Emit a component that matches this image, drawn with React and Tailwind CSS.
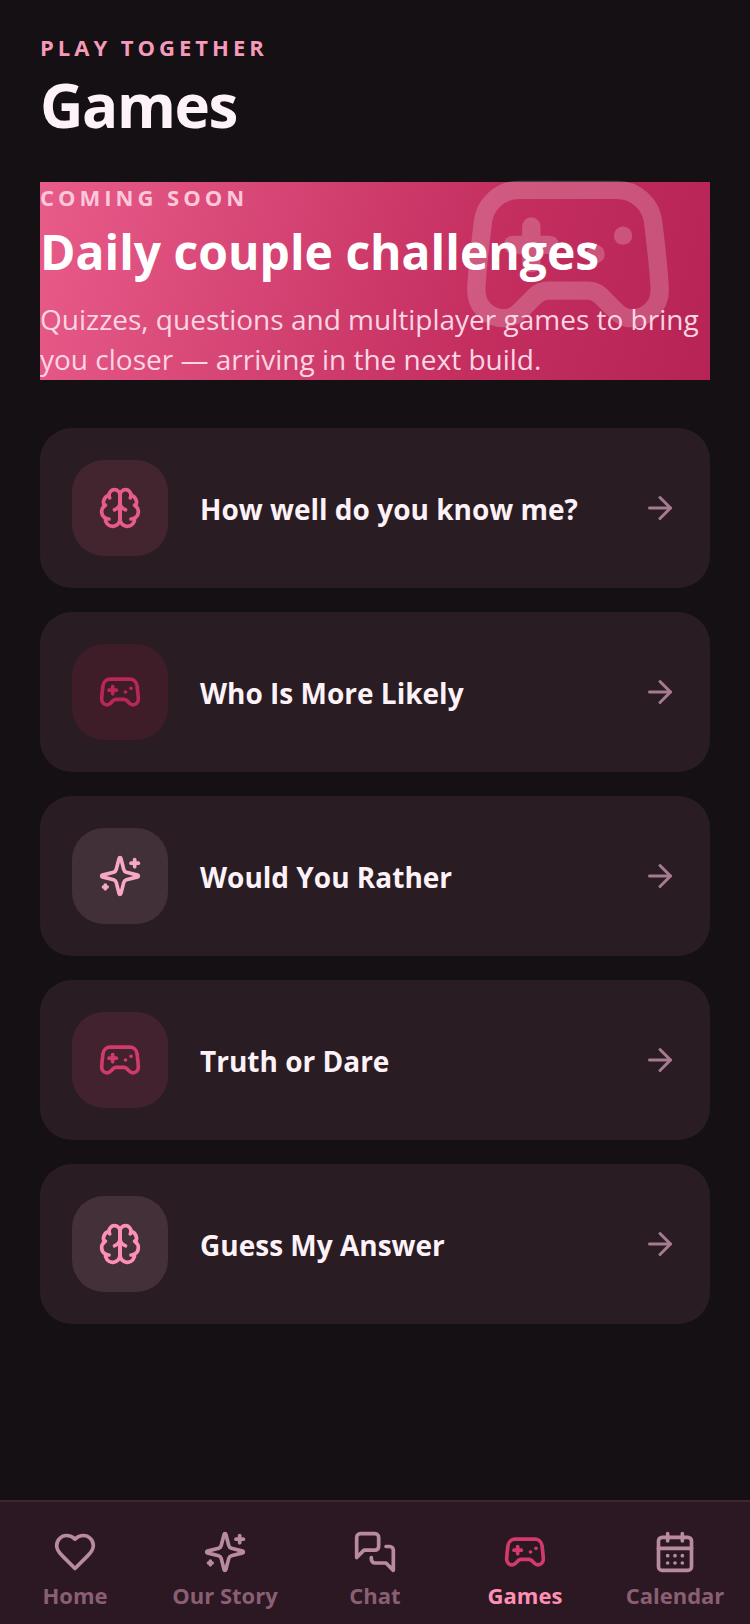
import { ArrowRight, CalendarDays, Gamepad2 } from "lucide-react";

// the installed lucide draws these differently, so the paths are written out here
function Stroke({ size, className, children }) {
  return (
    <svg
      xmlns="http://www.w3.org/2000/svg"
      width={size}
      height={size}
      viewBox="0 0 24 24"
      fill="none"
      stroke="currentColor"
      strokeWidth="2"
      strokeLinecap="round"
      strokeLinejoin="round"
      className={className}
    >
      {children}
    </svg>
  );
}

const Brain = (props) => (
  <Stroke {...props}>
    <path d="M12 5a3 3 0 1 0-5.997.125 4 4 0 0 0-2.526 5.77 4 4 0 0 0 .556 6.588A4 4 0 1 0 12 18Z" />
    <path d="M12 5a3 3 0 1 1 5.997.125 4 4 0 0 1 2.526 5.77 4 4 0 0 1-.556 6.588A4 4 0 1 1 12 18Z" />
    <path d="M15 13a4.5 4.5 0 0 1-3-4 4.5 4.5 0 0 1-3 4" />
    <path d="M17.599 6.5a3 3 0 0 0 .399-1.375" />
    <path d="M6.003 5.125A3 3 0 0 0 6.401 6.5" />
    <path d="M3.477 10.896a4 4 0 0 1 .585-.396" />
    <path d="M19.938 10.5a4 4 0 0 1 .585.396" />
    <path d="M6 18a4 4 0 0 1-1.967-.516" />
    <path d="M19.967 17.484A4 4 0 0 1 18 18" />
  </Stroke>
);

const Sparkles = (props) => (
  <Stroke {...props}>
    <path d="M9.937 15.5A2 2 0 0 0 8.5 14.063l-6.135-1.582a.5.5 0 0 1 0-.962L8.5 9.936A2 2 0 0 0 9.937 8.5l1.582-6.135a.5.5 0 0 1 .963 0L14.063 8.5A2 2 0 0 0 15.5 9.937l6.135 1.581a.5.5 0 0 1 0 .964L15.5 14.063a2 2 0 0 0-1.437 1.437l-1.582 6.135a.5.5 0 0 1-.963 0z" />
    <path d="M20 3v4" />
    <path d="M22 5h-4" />
    <path d="M4 17v2" />
    <path d="M5 18H3" />
  </Stroke>
);

const Heart = (props) => (
  <Stroke {...props}>
    <path d="M19 14c1.49-1.46 3-3.21 3-5.5A5.5 5.5 0 0 0 16.5 3c-1.76 0-3 .5-4.5 2-1.5-1.5-2.74-2-4.5-2A5.5 5.5 0 0 0 2 8.5c0 2.3 1.5 4.05 3 5.5l7 7Z" />
  </Stroke>
);

const Messages = (props) => (
  <Stroke {...props}>
    <path d="M14 9a2 2 0 0 1-2 2H6l-4 4V4a2 2 0 0 1 2-2h8a2 2 0 0 1 2 2z" />
    <path d="M18 9h2a2 2 0 0 1 2 2v11l-4-4h-6a2 2 0 0 1-2-2v-1" />
  </Stroke>
);

const games = [
  { title: "How well do you know me?", Icon: Brain, box: "bg-[#42252f]", color: "text-[#e85c8a]" },
  { title: "Who Is More Likely", Icon: Gamepad2, box: "bg-[#3e1d28]", color: "text-[#b8265a]" },
  { title: "Would You Rather", Icon: Sparkles, box: "bg-[#423039]", color: "text-[#f9a8c4]" },
  { title: "Truth or Dare", Icon: Gamepad2, box: "bg-[#42222e]", color: "text-[#d23a6c]" },
  { title: "Guess My Answer", Icon: Brain, box: "bg-[#433039]", color: "text-[#ff8fb5]" },
];

const tabs = [
  { label: "Home", Icon: Heart },
  { label: "Our Story", Icon: Sparkles },
  { label: "Chat", Icon: Messages },
  { label: "Games", Icon: Gamepad2, active: true },
  { label: "Calendar", Icon: CalendarDays },
];

export default function App() {
  return (
    <div className="flex h-[1624px] w-[750px] flex-col overflow-hidden bg-[#141014] font-['Open_Sans',sans-serif] text-[#fdf2f8]">
      <main className="flex-1 px-10 pt-[33px]">
        <p className="text-[22px] leading-[28px] font-bold tracking-[4px] text-[#f59ab8]">PLAY TOGETHER</p>
        <h1 className="mt-2 text-[60px] leading-[72px] font-bold tracking-[-1.4px]">Games</h1>

        <section className="relative mt-[41px] bg-linear-[105deg] from-[#e85c8a] via-[#c42f60] via-65% to-[#b82356] pb-px">
          <Gamepad2 className="absolute top-[-38px] right-[32px] text-white opacity-20" size={220} strokeWidth={2} />
          <div className="relative">
            <p className="text-[22px] leading-[30px] font-bold tracking-[4px] text-[#fbc8da]">COMING SOON</p>
            <h2 className="mt-[10px] text-[48px] leading-[60px] font-bold text-white">Daily couple challenges</h2>
            <p className="mt-[17px] text-[28px] leading-[40px] text-[#fcd5e3]">
              Quizzes, questions and multiplayer games to bring you closer — arriving in the next build.
            </p>
          </div>
        </section>

        <div className="mt-12 flex flex-col gap-6">
          {games.map(({ title, Icon, box, color }) => (
            <div key={title} className="flex h-40 items-center gap-8 rounded-[32px] bg-[#291c23] px-8">
              <div className={`flex size-24 shrink-0 items-center justify-center rounded-[32px] ${box} ${color}`}>
                <Icon size={44} />
              </div>
              <span className="flex-1 pt-[2px] text-[28px] leading-[36px] font-bold">{title}</span>
              <ArrowRight className="text-[#a87a90]" size={36} strokeWidth={2} />
            </div>
          ))}
        </div>
      </main>

      <nav className="grid h-[124px] grid-cols-5 border-t-2 border-[#3f2632] bg-[#2c1822] pt-[28px]">
        {tabs.map(({ label, Icon, active }) => (
          <div key={label} className="flex flex-col items-center">
            <Icon className={active ? "text-[#d23a6c]" : "text-[#b98ba0]"} size={44} strokeWidth={2} />
            <span className={`mt-[6px] text-[22px] leading-[30px] font-bold ${active ? "text-[#ff8fb5]" : "text-[#8a5f74]"}`}>{label}</span>
          </div>
        ))}
      </nav>
    </div>
  );
}
